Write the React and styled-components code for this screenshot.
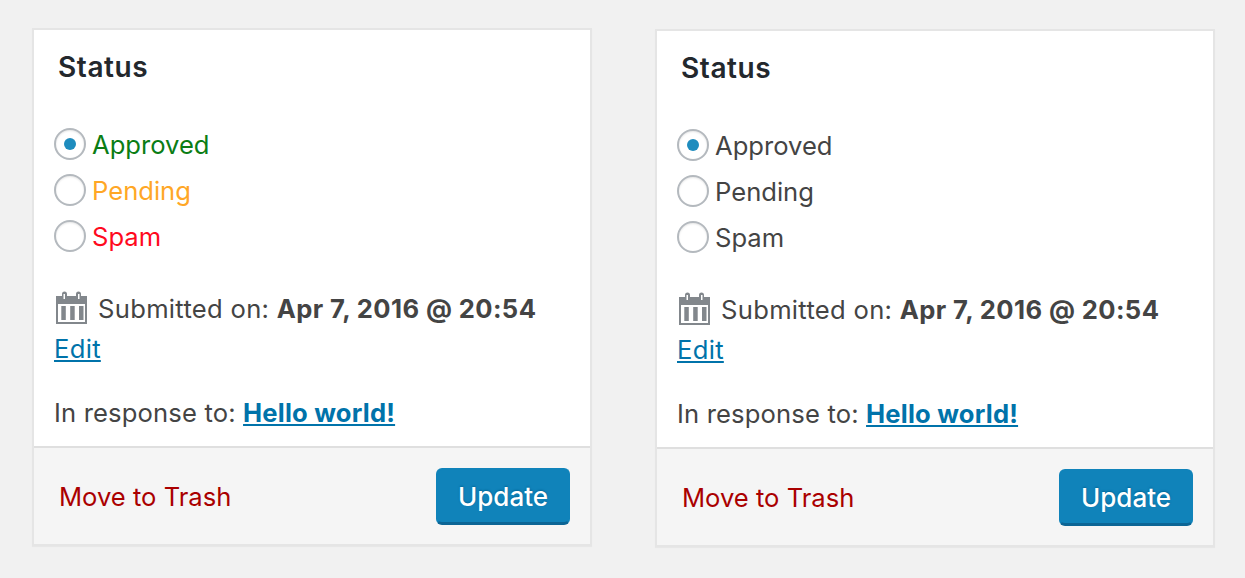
import React from "react";
import styled, { createGlobalStyle } from "styled-components";

const Global = createGlobalStyle`
  html, body { margin: 0; padding: 0; background: #f1f1f1; }
  body { font-family: Inter, "Liberation Sans", sans-serif; }
`;
const Page = styled.div`
  width: 1245px; height: 578px; box-sizing: border-box; overflow: hidden;
  display: flex; align-items: flex-start; gap: 63px; padding: 28px 0 0 32px;
`;
const Card = styled.section`
  width: 560px; height: 518px; box-sizing: border-box; margin-top: ${p => p.$drop}px;
  background: #fff; border: 2px solid #e5e5e5; display: flex; flex-direction: column;
  box-shadow: 0 1px 1px rgba(0,0,0,.04);
`;
const Body = styled.div`
  flex: 1; padding: 0 0 0 20px; color: #444; font-size: 25.6px;
`;
const Title = styled.h2`
  margin: 0; padding: 20px 0 0 4px; height: 91px; box-sizing: border-box;
  font-size: 28px; line-height: 34px; font-weight: 600; color: #23282d; letter-spacing: .6px;
`;
const RadioGroup = styled.div`display: flex; flex-direction: column;`;
const RadioRow = styled.label`
  height: 46px; display: flex; align-items: center; gap: 7px; color: ${p => p.$color};
  & > span:last-child { margin-left: -1px; }
`;
const Radio = styled.span`
  width: 32px; height: 32px; box-sizing: border-box; border-radius: 50%;
  border: 2px solid #b4b9be; background: #fff; display: flex; align-items: center; justify-content: center;
  box-shadow: inset 0 1px 2px rgba(0,0,0,.1);
  &::after { content: ""; display: ${p => p.$on ? "block" : "none"}; width: 12px; height: 12px; border-radius: 50%; background: #1e8cbe; }
`;
const Submitted = styled.div`
  margin-top: 29px; height: 40px; display: flex; align-items: center; gap: 10px; padding-left: 1px;
  letter-spacing: .3px;
`;
const CalendarIcon = styled.svg`
  width: 33px; height: 33px; fill: #82878c; margin-top: -2px;
`;
const Strong = styled.b`font-weight: 700; letter-spacing: .4px;`;
const Line = styled.div`line-height: 40px; height: 40px; margin-top: 1px; letter-spacing: .3px;`;
const Link = styled.a`
  color: #0073aa; text-decoration: underline; font-weight: ${p => p.$bold ? 700 : 400};
  letter-spacing: ${p => p.$bold ? ".2px" : ".3px"};
`;
const Response = styled.div`margin-top: 24px; line-height: 40px; letter-spacing: .15px;`;
const Footer = styled.footer`
  height: 98px; box-sizing: border-box; background: #f5f5f5; border-top: 2px solid #dfdfdf;
  display: flex; align-items: center; justify-content: space-between; padding: 0 20px 0 25px;
`;
const Trash = styled.a`color: #a00; font-size: 25.6px;`;
const Update = styled.button`
  width: 134px; height: 57px; margin-top: 1px; box-sizing: border-box; border-radius: 6px; padding: 1px 0 0;
  border: 2px solid #1083ba; border-bottom: 3px solid #0c6595;
  background: #1083ba; color: #fff; font: 500 26px Inter, "Liberation Sans", sans-serif;
  text-shadow: 0 -1px 2px #006799;
`;
const Calendar = () => (
  <CalendarIcon viewBox="0 0 33 33">
    <path d="M1 5h6V3a2.500 2.500 0 0 1 5 0v2h9V3a2.500 2.500 0 0 1 5 0v2h6v28H1zM3 13v18h27V13zM8.500 3v5h1.500V3zM23 3v5h1.500V3z" fillRule="evenodd"/>
    <path d="M6.300 15h4.500v14H6.300zM15.200 15h4.500v14h-4.500zM24 15h4.500v14H24z"/>
  </CalendarIcon>
);
const StatusCard = ({ drop, colors }) => (
  <Card $drop={drop}>
    <Body>
      <Title>Status</Title>
      <RadioGroup>
        <RadioRow $color={colors[0]}><Radio $on /><span>Approved</span></RadioRow>
        <RadioRow $color={colors[1]}><Radio /><span>Pending</span></RadioRow>
        <RadioRow $color={colors[2]}><Radio /><span>Spam</span></RadioRow>
      </RadioGroup>
      <Submitted><Calendar /><span>Submitted on: <Strong>Apr 7, 2016 @ 20:54</Strong></span></Submitted>
      <Line><Link href="#">Edit</Link></Line>
      <Response>In response to: <Link href="#" $bold>Hello world!</Link></Response>
    </Body>
    <Footer>
      <Trash>Move to Trash</Trash>
      <Update>Update</Update>
    </Footer>
  </Card>
);
export default function App() {
  return (
    <>
      <Global />
      <Page>
        <StatusCard drop={0} colors={["#0a7d14", "#ffa726", "#ff0a1e"]} />
        <StatusCard drop={1} colors={["#444", "#444", "#444"]} />
      </Page>
    </>
  );
}
